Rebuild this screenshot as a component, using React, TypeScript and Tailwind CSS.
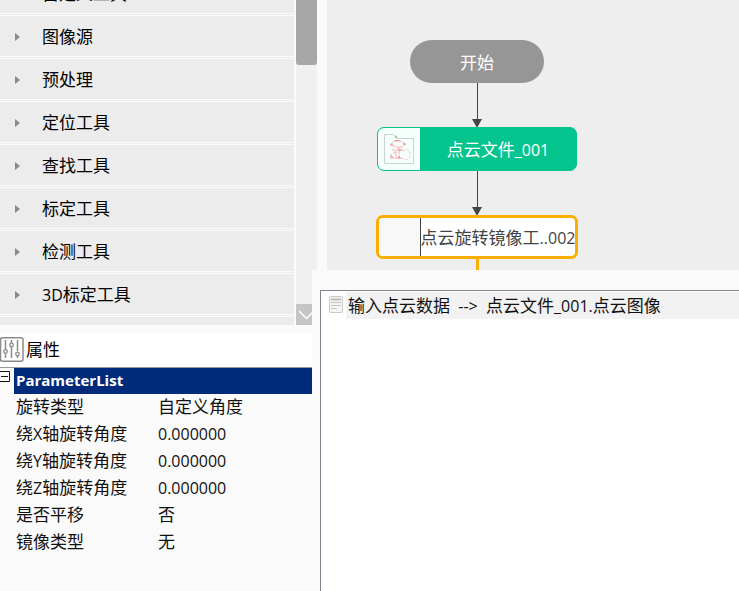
import React from "react";

const tools = ["自定义工具", "图像源", "预处理", "定位工具", "查找工具", "标定工具", "检测工具", "3D标定工具"];

const parameters = [
  { name: "旋转类型", value: "自定义角度" },
  { name: "绕X轴旋转角度", value: "0.000000" },
  { name: "绕Y轴旋转角度", value: "0.000000" },
  { name: "绕Z轴旋转角度", value: "0.000000" },
  { name: "是否平移", value: "否" },
  { name: "镜像类型", value: "无" },
];

/* Latin glyphs run a little smaller than the Chinese ones beside them. */
function Mixed({ text }: { text: string }) {
  return (
    <>
      {text.split(/([\x20-\x7e]+)/).map((part, i) =>
        i % 2 === 1 ? (
          <span key={i} className="text-[16px]">
            {part}
          </span>
        ) : (
          part
        )
      )}
    </>
  );
}

function ToolRow({ label }: { label: string }) {
  return (
    <li className="h-[43px] border-t border-[#fafafa] pt-px">
      <button type="button" className="flex h-full w-full items-center border-t border-[#fafafa] pt-[2px] pl-[15px] text-left">
        <svg width="6" height="8" viewBox="0 0 6 8" className="mr-[21px] shrink-0" aria-hidden="true">
          <path d="M0 0L5 4L0 8Z" fill="#8a8a8a" />
        </svg>
        <Mixed text={label} />
      </button>
    </li>
  );
}

function ToolTree() {
  return (
    <nav className="relative -mr-[5px] flex h-[325px] overflow-hidden bg-[#fafafa]">
      <div className="mr-[2px] min-w-0 flex-1 overflow-hidden bg-[#ececec] text-black">
        <ul className="-mt-[30px]">
          {tools.map((t) => (
            <ToolRow key={t} label={t} />
          ))}
          <li className="h-[43px] border-t border-[#fafafa] pt-px">
            <div className="border-t border-[#fafafa]" />
          </li>
        </ul>
      </div>
      <div className="flex w-[21px] flex-col justify-between bg-[#f0f0f0]">
        <div className="h-[65px] rounded-b-[3px] bg-[#a7a7a7]" />
        <button type="button" aria-label="向下滚动" className="flex h-[21px] items-center justify-center bg-[#c6c4c6]">
          <svg width="17" height="10" viewBox="0 0 17 10" fill="none" stroke="#fff" strokeWidth="1.5">
            <path d="M1 1L8.500 8.500L16 1" />
          </svg>
        </button>
      </div>
    </nav>
  );
}

function Properties() {
  return (
    <section className="mt-[8px] flex flex-1 flex-col">
      <h2 className="flex h-[35px] items-center gap-[2px] border-b border-[#999] bg-white text-black">
        <svg width="24" height="26" viewBox="0 0 24 26" fill="none" stroke="#8a8a8a" aria-hidden="true">
          <rect x="0.500" y="0.750" width="22.500" height="23.500" rx="2" strokeWidth="1.500" />
          <path d="M5.500 3V12M5.500 17V21M11.500 3V6M11.500 10V21M17.500 3V14M17.500 19V21" strokeWidth="1.500" />
          <circle cx="5.500" cy="14.500" r="1.800" strokeWidth="1.300" />
          <circle cx="11.500" cy="8" r="1.800" strokeWidth="1.300" />
          <circle cx="17.500" cy="17" r="1.800" strokeWidth="1.300" />
        </svg>
        属性
      </h2>
      <div className="flex">
        <button type="button" aria-label="折叠" className="mt-[3px] h-[11px] w-[14px] shrink-0">
          <svg width="10" height="11" viewBox="0 0 10 11" fill="none" stroke="#111">
            <path d="M0 0.500H9.500V10.500H0M1 5.500H8" />
          </svg>
        </button>
        <table className="flex-1 table-fixed border-collapse text-[#111]">
          <thead>
            <tr>
              <th colSpan={2} className="h-[26px] bg-[#002b7a] p-0 pl-[2px] text-left align-top text-[15px] leading-[24px] font-bold text-white">
                ParameterList
              </th>
            </tr>
          </thead>
          <tbody className="leading-[26px]">
            {parameters.map((p) => (
              <tr key={p.name} className="h-[27px] align-top">
                <th scope="row" className="w-[144px] p-0 pl-[2px] text-left font-normal">
                  <Mixed text={p.name} />
                </th>
                <td className="p-0">
                  <Mixed text={p.value} />
                </td>
              </tr>
            ))}
          </tbody>
        </table>
      </div>
    </section>
  );
}

function Arrow() {
  return (
    <svg width="12" height="44" viewBox="0 0 12 44" className="shrink-0" aria-hidden="true">
      <path d="M6.500 0V38" stroke="#444" />
      <path d="M1 36H11L6.500 44H5.500Z" fill="#444" />
    </svg>
  );
}

function CloudFileIcon() {
  return (
    <svg width="32" height="32" viewBox="0 0 32 32" fill="none" aria-hidden="true">
      <path d="M1.500 1.500H10.500L14.500 5.500H30.500V30.500H1.500Z" stroke="#cbd3d0" />
      <path d="M12 3L14 5" stroke="#b4bdba" strokeWidth="2" />
      <path d="M8 11L12 8H18L22 11L20 14H12L8 11M16 14V26M9 17H21" stroke="#f3aaaa" strokeDasharray="3 1" />
      <path d="M13 18L8 22L7 25H13M13 19V25L19 25" stroke="#f0a4a4" strokeDasharray="4 1" />
      <path d="M20 18L24 16L27 19V24L23 27L19 25" stroke="#f8cccc" strokeDasharray="3 1" />
      <path d="M7 12H10M12 7.500H16M20 11H23M15 17H18M16 23V26M8 24H10" stroke="#e88080" />
    </svg>
  );
}

function FlowCanvas() {
  return (
    <section className="ml-[15px] h-[270px] overflow-hidden bg-[#eee] pt-[40px]">
      <div className="ml-[49px] flex w-[202px] flex-col items-center">
        <div className="flex h-[43px] w-[134px] items-center justify-center rounded-full bg-[#969696] pt-[2px] text-white">开始</div>
        <Arrow />
        <div className="flex h-[44px] w-[200px] overflow-hidden rounded-[7px] border border-[#05c48d] bg-[#05c48d] text-white">
          <div className="flex w-[42px] items-center justify-center bg-[#f5fffc]">
            <CloudFileIcon />
          </div>
          <div className="flex flex-1 items-center justify-center pt-[2px]">
            <span>
              <Mixed text="点云文件_001" />
            </span>
          </div>
        </div>
        <Arrow />
        <div className="flex h-[44px] w-[202px] overflow-hidden rounded-[7px] border-3 border-[#faae00] bg-white text-[#444]">
          <div className="w-[42px] shrink-0 border-r border-[#444] bg-[#f8f8f8]" />
          <div className="flex min-w-0 flex-1 items-center justify-center pt-[2px] whitespace-nowrap">
            <span>
              <Mixed text="点云旋转镜像工..002" />
            </span>
          </div>
        </div>
        <div className="h-[11px] w-[3px] bg-[#faae00]" />
      </div>
    </section>
  );
}

function InputList() {
  return (
    <section className="relative flex flex-1 flex-col bg-[#fafafa] pt-[20px] pl-[8px]">
      <ul className="flex-1 border-t border-l border-[#828290] bg-white">
        <li className="flex pt-px pl-[8px]">
          <svg width="14" height="17" viewBox="0 0 14 17" fill="none" className="mt-[4px] mr-[3px] shrink-0" aria-hidden="true">
            <rect x="0.500" y="0.500" width="13" height="16" rx="1.500" fill="#f6f6f6" stroke="#c8c8c8" />
            <path d="M2 3.500H12" stroke="#bdbdbd" strokeWidth="2" />
            <path d="M2 6.500H12M2 9.500H12M2 12.500H8" stroke="#c4c4c4" />
          </svg>
          <span className="flex h-[27px] flex-1 items-center bg-[#f2f2f2] pt-px pl-[2px] text-[#111]">
            <span className="whitespace-pre">
              <Mixed text="输入点云数据  -->  点云文件_001.点云图像" />
            </span>
          </span>
        </li>
      </ul>
    </section>
  );
}

export default function App() {
  return (
    <div className="flex min-h-screen bg-[#fafafa] font-['Open_Sans','Noto_Sans_CJK_SC',sans-serif] text-[17px] leading-[24px]">
      <div className="flex w-[312px] shrink-0 flex-col">
        <ToolTree />
        <Properties />
      </div>
      <main className="flex min-w-0 flex-1 flex-col">
        <FlowCanvas />
        <InputList />
      </main>
    </div>
  );
}
